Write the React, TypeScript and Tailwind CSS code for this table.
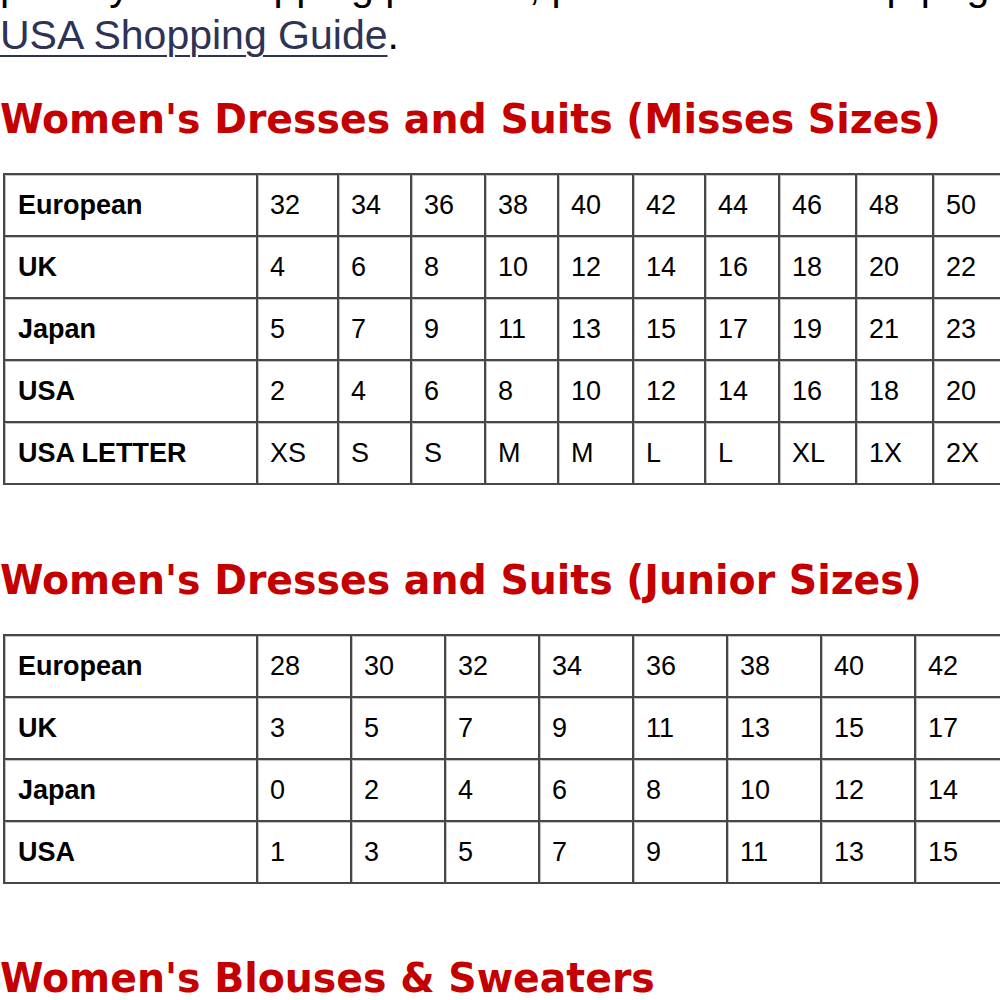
import React from 'react';

const misses = {
  widths: [253, 81, 73, 74, 73, 75, 72, 74, 77, 77, 80],
  rows: [
    ['European', '32', '34', '36', '38', '40', '42', '44', '46', '48', '50'],
    ['UK', '4', '6', '8', '10', '12', '14', '16', '18', '20', '22'],
    ['Japan', '5', '7', '9', '11', '13', '15', '17', '19', '21', '23'],
    ['USA', '2', '4', '6', '8', '10', '12', '14', '16', '18', '20'],
    ['USA LETTER', 'XS', 'S', 'S', 'M', 'M', 'L', 'L', 'XL', '1X', '2X'],
  ],
};

const junior = {
  widths: [253, 94, 94, 94, 94, 94, 94, 94, 94],
  rows: [
    ['European', '28', '30', '32', '34', '36', '38', '40', '42'],
    ['UK', '3', '5', '7', '9', '11', '13', '15', '17'],
    ['Japan', '0', '2', '4', '6', '8', '10', '12', '14'],
    ['USA', '1', '3', '5', '7', '9', '11', '13', '15'],
  ],
};

const Heading: React.FC<{ children: React.ReactNode; className?: string }> = ({ children, className }) => (
  <h2
    className={`whitespace-nowrap text-[40px] leading-[48px] font-bold text-[#c40000] origin-left scale-x-[0.985] ${className ?? ''}`}
    style={{ fontFamily: '"DejaVu Sans", Verdana, sans-serif' }}
  >
    {children}
  </h2>
);

const SizeTable: React.FC<{ widths: number[]; rows: string[][]; className?: string }> = ({ widths, rows, className }) => (
  <table
    className={`ml-[3px] border-collapse table-fixed text-[27px] text-black ${className ?? ''}`}
    style={{ width: widths.reduce((a, b) => a + b, 0) }}
  >
    <colgroup>
      {widths.map((w, i) => (
        <col key={i} style={{ width: w }} />
      ))}
    </colgroup>
    <tbody>
      {rows.map((row, r) => (
        <tr key={r} className="h-[62px]">
          {row.map((cell, c) => (
            <td
              key={c}
              className={`border-2 border-[#474747] align-middle whitespace-nowrap shadow-[inset_1px_1px_0_#c4c4c4] ${
                c === 0 ? 'font-bold pl-[13px]' : 'pl-[12px]'
              }`}
            >
              {cell}
            </td>
          ))}
        </tr>
      ))}
    </tbody>
  </table>
);

export default function App() {
  return (
    <div
      className="w-[1000px] h-[1000px] overflow-hidden bg-white"
      style={{ fontFamily: '"Liberation Sans", Arial, sans-serif' }}
    >
      <p className="mt-[-38px] text-[41px] leading-[49px] text-black whitespace-nowrap">
        privacy and shipping process, please see our help page
        <br />
        <a href="#" className="text-[#2c3354] underline decoration-2 underline-offset-[6px]">
          USA Shopping Guide
        </a>
        .
      </p>

      <Heading className="mt-[35px]">Women's Dresses and Suits (Misses Sizes)</Heading>
      <SizeTable widths={misses.widths} rows={misses.rows} className="mt-[30px]" />

      <Heading className="mt-[71px]">Women's Dresses and Suits (Junior Sizes)</Heading>
      <SizeTable widths={junior.widths} rows={junior.rows} className="mt-[30px]" />

      <Heading className="mt-[70px]">Women's Blouses &amp; Sweaters</Heading>
    </div>
  );
}
